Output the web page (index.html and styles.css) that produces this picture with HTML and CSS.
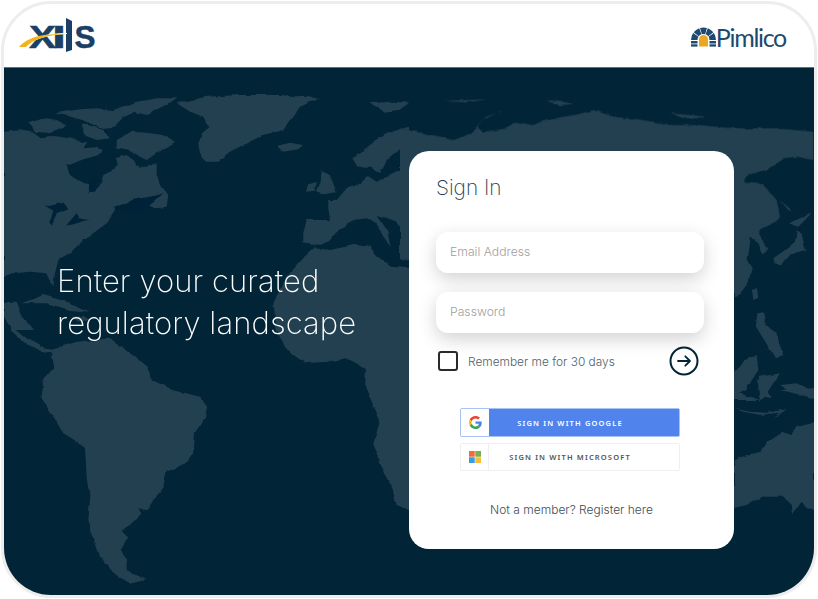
FILE: index.html
```html
<!DOCTYPE html>
<html lang="en">
<head>
<meta charset="utf-8">
<title>Sign In</title>
<link rel="stylesheet" href="styles.css">
</head>
<body>
<div class="frame">
  <header class="topbar">
    <svg class="logo-xis" viewBox="0 0 80 36" width="80" height="36" role="img" aria-label="XIS">
      <text class="xis-letter" x="10" y="29.500" textLength="27" lengthAdjust="spacingAndGlyphs">X</text>
      <text class="xis-letter" x="33" y="29.500" textLength="14" lengthAdjust="spacingAndGlyphs">I</text>
      <path class="xis-bar" d="M47 0 L53 3 L53 32 L47 34 Z"/>
      <text class="xis-letter" x="55.500" y="29.500" textLength="21" lengthAdjust="spacingAndGlyphs">S</text>
      <path class="xis-gap" d="M7 29 C14 21 28 17 48 16 L48 15 C26 15 12 20 5 29 Z"/>
      <path class="xis-swoosh" d="M0 29 C8 20 20 15.500 48 16 C28 17 14 21 7 29 Z"/>
    </svg>
    <div class="pimlico">
      <svg class="pimlico-mark" viewBox="0 0 25 20" width="25" height="20" aria-hidden="true">
        <path class="arch" d="M0 13 A12.500 12.500 0 0 1 2.140 6.010 L7.530 9.640 A6 6 0 0 0 6.500 13 Z"/>
        <path class="arch" d="M2.650 5.300 A12.500 12.500 0 0 1 8.220 1.250 L10.450 7.360 A6 6 0 0 0 7.770 9.300 Z"/>
        <path class="arch" d="M9.050 0.980 A12.500 12.500 0 0 1 15.950 0.980 L14.150 7.230 A6 6 0 0 0 10.850 7.230 Z"/>
        <path class="arch" d="M16.780 1.250 A12.500 12.500 0 0 1 22.350 5.300 L17.230 9.300 A6 6 0 0 0 14.550 7.360 Z"/>
        <path class="arch" d="M22.860 6.010 A12.500 12.500 0 0 1 25 13 L18.500 13 A6 6 0 0 0 17.470 9.640 Z"/>
        <path class="door" d="M8 19.500 L8 12.500 A4.500 4.500 0 0 1 17 12.500 L17 19.500 Z"/>
        <rect class="arch" x="0" y="14" width="6.500" height="2.500"/>
        <rect class="arch" x="18.500" y="14" width="6.500" height="2.500"/>
        <rect class="arch" x="0" y="17.300" width="6.500" height="2.300"/>
        <rect class="arch" x="18.500" y="17.300" width="6.500" height="2.300"/>
      </svg>
      <span class="pimlico-name">Pimlico</span>
    </div>
  </header>
  <main class="stage">
    <svg class="world" viewBox="4 67 810 528" preserveAspectRatio="none" aria-hidden="true">
      <defs>
        <filter id="coast" filterUnits="userSpaceOnUse" x="4" y="67" width="810" height="528">
          <feTurbulence type="fractalNoise" baseFrequency="0.07" numOctaves="3" seed="4" result="noise"/>
          <feDisplacementMap in="SourceGraphic" in2="noise" scale="4" xChannelSelector="R" yChannelSelector="G"/>
          <feGaussianBlur stdDeviation="0.45"/>
        </filter>
      </defs>
      <g filter="url(#coast)">
      <g transform="translate(0 60) scale(0.3333)">
        <path class="land" d="M12 212 L60 208 L100 215 L125 235 L165 228 L215 236 L240 250 L262 245 L250 265 L285 262 L310 270 L295 285 L245 300 L200 318 L210 345 L245 368 L268 372 L265 395 L285 395 L300 375 L310 345 L330 335 L350 318 L345 295 L380 285 L400 300 L420 320 L440 320 L470 310 L470 345 L490 385 L505 405 L500 440 L470 445 L440 430 L400 420 L350 440 L335 465 L320 490 L280 520 L240 550 L210 580 L175 600 L165 640 L160 680 L140 640 L90 635 L40 640 L12 650 Z"/>
        <path class="land" d="M350 240 L395 215 L440 218 L490 225 L528 245 L505 262 L470 280 L440 300 L420 290 L390 270 L350 262 Z"/>
        <path class="land" d="M165 160 L240 148 L290 145 L340 150 L410 125 L470 115 L530 115 L500 135 L470 150 L440 165 L400 155 L370 175 L345 200 L300 205 L250 180 L215 170 Z"/>
        <path class="land" d="M85 190 L135 175 L170 180 L200 195 L150 220 L110 215 Z"/>
        <path class="land" d="M250 190 L310 210 L330 235 L290 240 L250 225 Z"/>
        <path class="land" d="M530 130 L620 110 L720 105 L850 105 L960 115 L900 140 L880 170 L850 210 L790 225 L740 250 L690 275 L650 305 L620 305 L600 280 L595 250 L605 225 L625 200 L610 170 L570 155 Z"/>
        <path class="land" d="M830 258 L870 248 L910 255 L895 268 L850 275 Z"/>
        <path class="land" d="M1105 130 L1180 125 L1225 128 L1195 150 L1150 155 Z"/>
        <path class="land" d="M950 395 L962 365 L965 330 L990 345 L1005 375 L1010 397 L975 402 Z"/>
        <path class="land" d="M918 395 L925 372 L950 365 L945 392 Z"/>
        <path class="land" d="M1230 200 L1170 215 L1130 240 L1090 270 L1060 295 L1075 320 L1110 320 L1140 340 L1160 300 L1200 265 L1230 260 Z"/>
        <path class="land" d="M1230 320 L1180 340 L1130 365 L1100 345 L1085 370 L1040 385 L1010 420 L985 420 L985 445 L990 480 L920 480 L910 520 L910 550 L945 555 L985 545 L1020 510 L1060 480 L1100 475 L1130 490 L1150 530 L1175 560 L1165 515 L1130 465 L1180 480 L1230 530 Z"/>
        <path class="land" d="M945 565 L990 570 L1060 555 L1115 560 L1130 590 L1170 620 L1230 625 L1230 810 L830 810 L820 730 L860 650 L905 600 Z"/>
        <path class="land" d="M12 725 L50 725 L70 775 L100 810 L35 810 L12 770 Z"/>
        <path class="land" d="M65 730 L130 705 L200 725 L270 755 L210 750 L140 730 Z"/>
        <path class="land" d="M215 770 L250 768 L270 780 L235 785 Z"/>
        <path class="sea" d="M135 440 L190 428 L205 445 L170 460 L155 500 L148 490 L160 455 Z"/>
        <path class="sea" d="M195 500 L230 460 L240 475 L265 480 L230 490 Z"/>
        <path class="sea" d="M340 445 L400 420 L470 405 L490 400 L440 440 L410 460 L380 455 Z"/>
        <path class="sea" d="M268 372 L290 345 L295 360 L278 395 L265 395 Z"/>
      </g>
      <g transform="translate(0 330) scale(0.3333)">
        <path class="land" d="M830 0 L1230 0 L1230 545 L1190 525 L1175 470 L1150 420 L1120 345 L1140 270 L1095 170 L1098 115 L1040 85 L985 95 L915 100 L860 60 Z"/>
        <path class="land" d="M150 60 L230 35 L330 25 L380 60 L440 110 L460 150 L520 180 L600 200 L622 225 L615 260 L585 310 L582 360 L560 400 L500 425 L490 470 L440 540 L410 535 L425 550 L390 585 L365 600 L385 620 L362 655 L380 690 L380 720 L440 750 L395 760 L350 740 L300 680 L280 620 L265 570 L270 510 L260 440 L255 350 L190 310 L125 205 L130 150 L160 115 Z"/>
        <path class="land" d="M50 0 L80 25 L130 55 L160 60 L150 70 L120 65 L70 35 L30 0 Z"/>
      </g>
      <g transform="translate(400 60) scale(0.3333)">
        <path class="land" d="M0 205 L100 225 L160 240 L215 220 L250 180 L300 155 L320 150 L260 170 L230 200 L250 215 L320 205 L345 185 L400 195 L430 180 L520 165 L580 150 L640 170 L720 178 L820 195 L900 195 L1000 205 L1130 205 L1240 215 L1240 300 L1190 290 L1150 295 L1100 330 L1040 345 L1030 365 L1090 370 L1130 420 L1140 470 L1100 500 L1050 530 L1040 600 L0 600 Z"/>
        <path class="land" d="M440 122 L480 122 L520 135 L480 138 Z"/>
        <path class="land" d="M130 122 L200 120 L265 118 L200 128 Z"/>
        <path class="land" d="M810 160 L870 165 L920 170 L860 178 Z"/>
      </g>
      <g transform="translate(730 200) scale(0.3333)">
        <path class="land" d="M12 0 L135 0 L125 35 L95 65 L85 90 L115 150 L100 165 L85 130 L60 110 L30 125 L15 100 L12 95 Z"/>
        <path class="land" d="M12 155 L45 170 L65 205 L55 250 L30 285 L12 292 Z"/>
        <path class="land" d="M130 175 L165 150 L195 125 L200 90 L215 105 L228 150 L180 165 L155 195 L135 190 Z"/>
        <path class="land" d="M180 70 L210 55 L245 40 L225 60 L205 80 Z"/>
        <path class="land" d="M150 0 L190 35 L175 30 Z"/>
        <path class="land" d="M66 270 L78 265 L82 295 L70 300 Z"/>
        <path class="land" d="M82 340 L100 340 L105 370 L140 405 L160 465 L135 475 L115 440 L90 400 L78 380 Z"/>
        <path class="land" d="M12 515 L45 480 L80 465 L85 510 L60 550 L30 570 L12 570 Z"/>
        <path class="land" d="M90 530 L150 520 L130 550 L110 580 L90 560 Z"/>
        <path class="land" d="M150 555 L200 550 L252 575 L252 595 L190 580 Z"/>
        <path class="land" d="M12 575 L60 590 L90 600 L12 600 Z"/>
      </g>
      <g transform="translate(730 380) scale(0.3333)">
        <path class="land" d="M12 0 L60 0 L50 30 L20 45 L12 45 Z"/>
        <path class="land" d="M85 0 L110 20 L125 55 L105 50 L90 65 L85 30 Z"/>
        <path class="land" d="M150 30 L252 25 L252 45 L200 40 Z"/>
        <path class="land" d="M12 85 L60 95 L110 98 L170 88 L125 120 L150 98 L90 105 L40 95 Z"/>
        <path class="land" d="M12 240 L50 225 L90 215 L110 185 L155 155 L185 165 L200 140 L252 130 L252 390 L230 385 L215 365 L190 400 L185 375 L160 350 L100 350 L50 375 L12 385 Z"/>
      </g>
      </g>
    </svg>
    <section class="hero">
      <h1 class="hero-title">Enter your curated<br>regulatory landscape</h1>
    </section>
    <section class="card">
      <h2 class="card-title">Sign In</h2>
      <form class="fields">
        <input class="field" type="email" placeholder="Email Address">
        <input class="field" type="password" placeholder="Password">
      </form>
      <div class="remember-row">
        <label class="remember">
          <span class="check"></span>
          <span>Remember me for 30 days</span>
        </label>
        <svg class="go" viewBox="0 0 30 30" width="30" height="30" role="img" aria-label="Submit">
          <circle cx="15" cy="15" r="13.500"/>
          <path d="M9 15 H21 M16.300 10.300 L21 15 L16.300 19.700"/>
        </svg>
      </div>
      <div class="sso">
        <div class="sso-btn sso-google">
          <span class="sso-icon">
            <svg viewBox="0 0 48 48" width="13" height="13" aria-hidden="true">
              <path fill="#EA4335" d="M24 9.500c3.500 0 6.700 1.200 9.200 3.600l6.900-6.900C35.900 2.400 30.500 0 24 0 14.600 0 6.500 5.400 2.600 13.200l8 6.200C12.400 13.700 17.700 9.500 24 9.500z"/>
              <path fill="#4285F4" d="M47 24.500c0-1.600-.1-3.100-.4-4.500H24v9h12.900c-.6 3-2.200 5.500-4.700 7.200l7.700 6C44.400 37.900 47 31.800 47 24.500z"/>
              <path fill="#FBBC05" d="M10.500 28.600c-.5-1.400-.8-3-.8-4.600s.3-3.200.8-4.600l-8-6.200C.9 16.500 0 20.100 0 24s.9 7.500 2.600 10.800l7.900-6.200z"/>
              <path fill="#34A853" d="M24 48c6.500 0 11.900-2.100 15.900-5.800l-7.700-6c-2.200 1.400-4.900 2.300-8.200 2.300-6.300 0-11.600-4.200-13.500-9.900l-8 6.200C6.500 42.600 14.600 48 24 48z"/>
            </svg>
          </span>
          <span class="sso-label">SIGN IN WITH GOOGLE</span>
        </div>
        <div class="sso-btn sso-microsoft">
          <span class="sso-icon">
            <svg viewBox="0 0 13 13" width="12" height="12" aria-hidden="true">
              <rect fill="#EE6C3A" width="6.200" height="6.200"/>
              <rect fill="#79B04A" x="6.800" width="6.200" height="6.200"/>
              <rect fill="#3A9BE6" y="6.800" width="6.200" height="6.200"/>
              <rect fill="#FDBB3A" x="6.800" y="6.800" width="6.200" height="6.200"/>
            </svg>
          </span>
          <span class="sso-label">SIGN IN WITH MICROSOFT</span>
        </div>
      </div>
      <p class="register">Not a member? Register here</p>
    </section>
  </main>
</div>
</body>
</html>
```
FILE: styles.css
```css
* { box-sizing: border-box; }
html, body { margin: 0; height: 100%; background: #fff; overflow: hidden; }
body { padding: 1px; font-family: "Inter", "Liberation Sans", sans-serif; }

.frame {
  width: 816px;
  height: 597px;
  border: 3px solid #ededed;
  border-radius: 50px;
  overflow: hidden;
  display: flex;
  flex-direction: column;
  background: #fff;
}

.topbar {
  height: 63px;
  flex: none;
  display: flex;
  justify-content: space-between;
  align-items: flex-start;
  padding: 14px 28px 0 15px;
}
.logo-xis { display: block; overflow: visible; }
.xis-letter {
  font-family: "Liberation Sans", sans-serif;
  font-weight: 700;
  font-size: 32px;
  fill: #1c3f66;
  stroke: #1c3f66;
  stroke-width: 0.5px;
}
.xis-bar { fill: #1c3f66; }
.xis-gap { fill: #fff; }
.xis-swoosh { fill: #f2b41b; }

.pimlico { display: flex; align-items: center; gap: 0; margin-top: 7px; }
.pimlico-mark { display: block; }
.arch { fill: #1d4a6e; }
.door { fill: #eda522; }
.pimlico-name {
  font-family: "Lato", sans-serif;
  font-weight: 400;
  font-size: 25px;
  line-height: 24px;
  letter-spacing: -1.3px;
  color: #1d4a6e;
}

.stage {
  position: relative;
  flex: 1;
  display: flex;
  background: #012437;
  border-top: 1px solid #5b7180;
  overflow: hidden;
}
.world { position: absolute; inset: -1px 0 0 0; width: 810px; height: 528px; }
.land { fill: #233f4f; }
.sea { fill: #012437; }

.hero { position: relative; width: 405px; padding: 192px 0 0 53px; }
.hero-title {
  margin: 0;
  font-weight: 250;
  font-size: 31px;
  letter-spacing: 0.1px;
  line-height: 42px;
  color: #fff;
}

.card {
  position: relative;
  width: 325px;
  height: 398px;
  margin-top: 83px;
  padding: 22px 30px 0 27px;
  background: #fff;
  border-radius: 20px;
}
.card-title {
  margin: 0;
  font-weight: 250;
  font-size: 20.800px;
  line-height: 30px;
  color: #1d3a4c;
}

.fields { display: flex; flex-direction: column; gap: 19px; margin-top: 29px; }
.field {
  display: block;
  width: 268px;
  height: 41px;
  padding: 0 14px 2px;
  border: 0;
  border-radius: 12px;
  background: #fff;
  box-shadow: 0 6px 18px rgba(0, 0, 0, 0.18);
  font: 300 12.200px "Inter", "Liberation Sans", sans-serif;
  outline: none;
}
.field::placeholder { color: #a0a0a0; opacity: 1; }

.remember-row {
  display: flex;
  align-items: center;
  justify-content: space-between;
  margin-top: 13px;
  padding: 0 5px 0 2px;
}
.remember { display: flex; align-items: center; gap: 10px; font-weight: 300; font-size: 11.900px; color: #4f5f6a; }
.check { width: 20px; height: 20px; border: 2px solid #2a2a2a; border-radius: 3px; }
.go { display: block; }
.go circle { fill: none; stroke: #012437; stroke-width: 2; }
.go path { fill: none; stroke: #012437; stroke-width: 1.800; stroke-linecap: round; stroke-linejoin: round; }

.sso { display: flex; flex-direction: column; gap: 6px; margin: 32px 0 0 24px; }
.sso-btn {
  width: 220px;
  display: flex;
  align-items: stretch;
  font-family: "Noto Sans", sans-serif;
  font-weight: 600;
  font-size: 7.500px;
  letter-spacing: 1.150px;
  border-radius: 2px;
}
.sso-google { height: 29px; background: #5083ec; color: #fff; border: 1px solid #a9c2f5; }
.sso-microsoft { height: 28px; background: #fff; color: #555; border: 1px solid #efefef; }
.sso-icon { width: 28px; flex: none; display: flex; align-items: center; justify-content: center; background: #fff; }
.sso-microsoft .sso-icon { border-right: 1px solid #efefef; }
.sso-label { flex: 1; display: flex; align-items: center; justify-content: center; padding-right: 28px; }

.register {
  margin: 31px 0 0 0;
  text-align: center;
  padding-left: 3px;
  font-weight: 300;
  font-size: 12px;
  line-height: 16px;
  color: #3c4c58;
}
```
